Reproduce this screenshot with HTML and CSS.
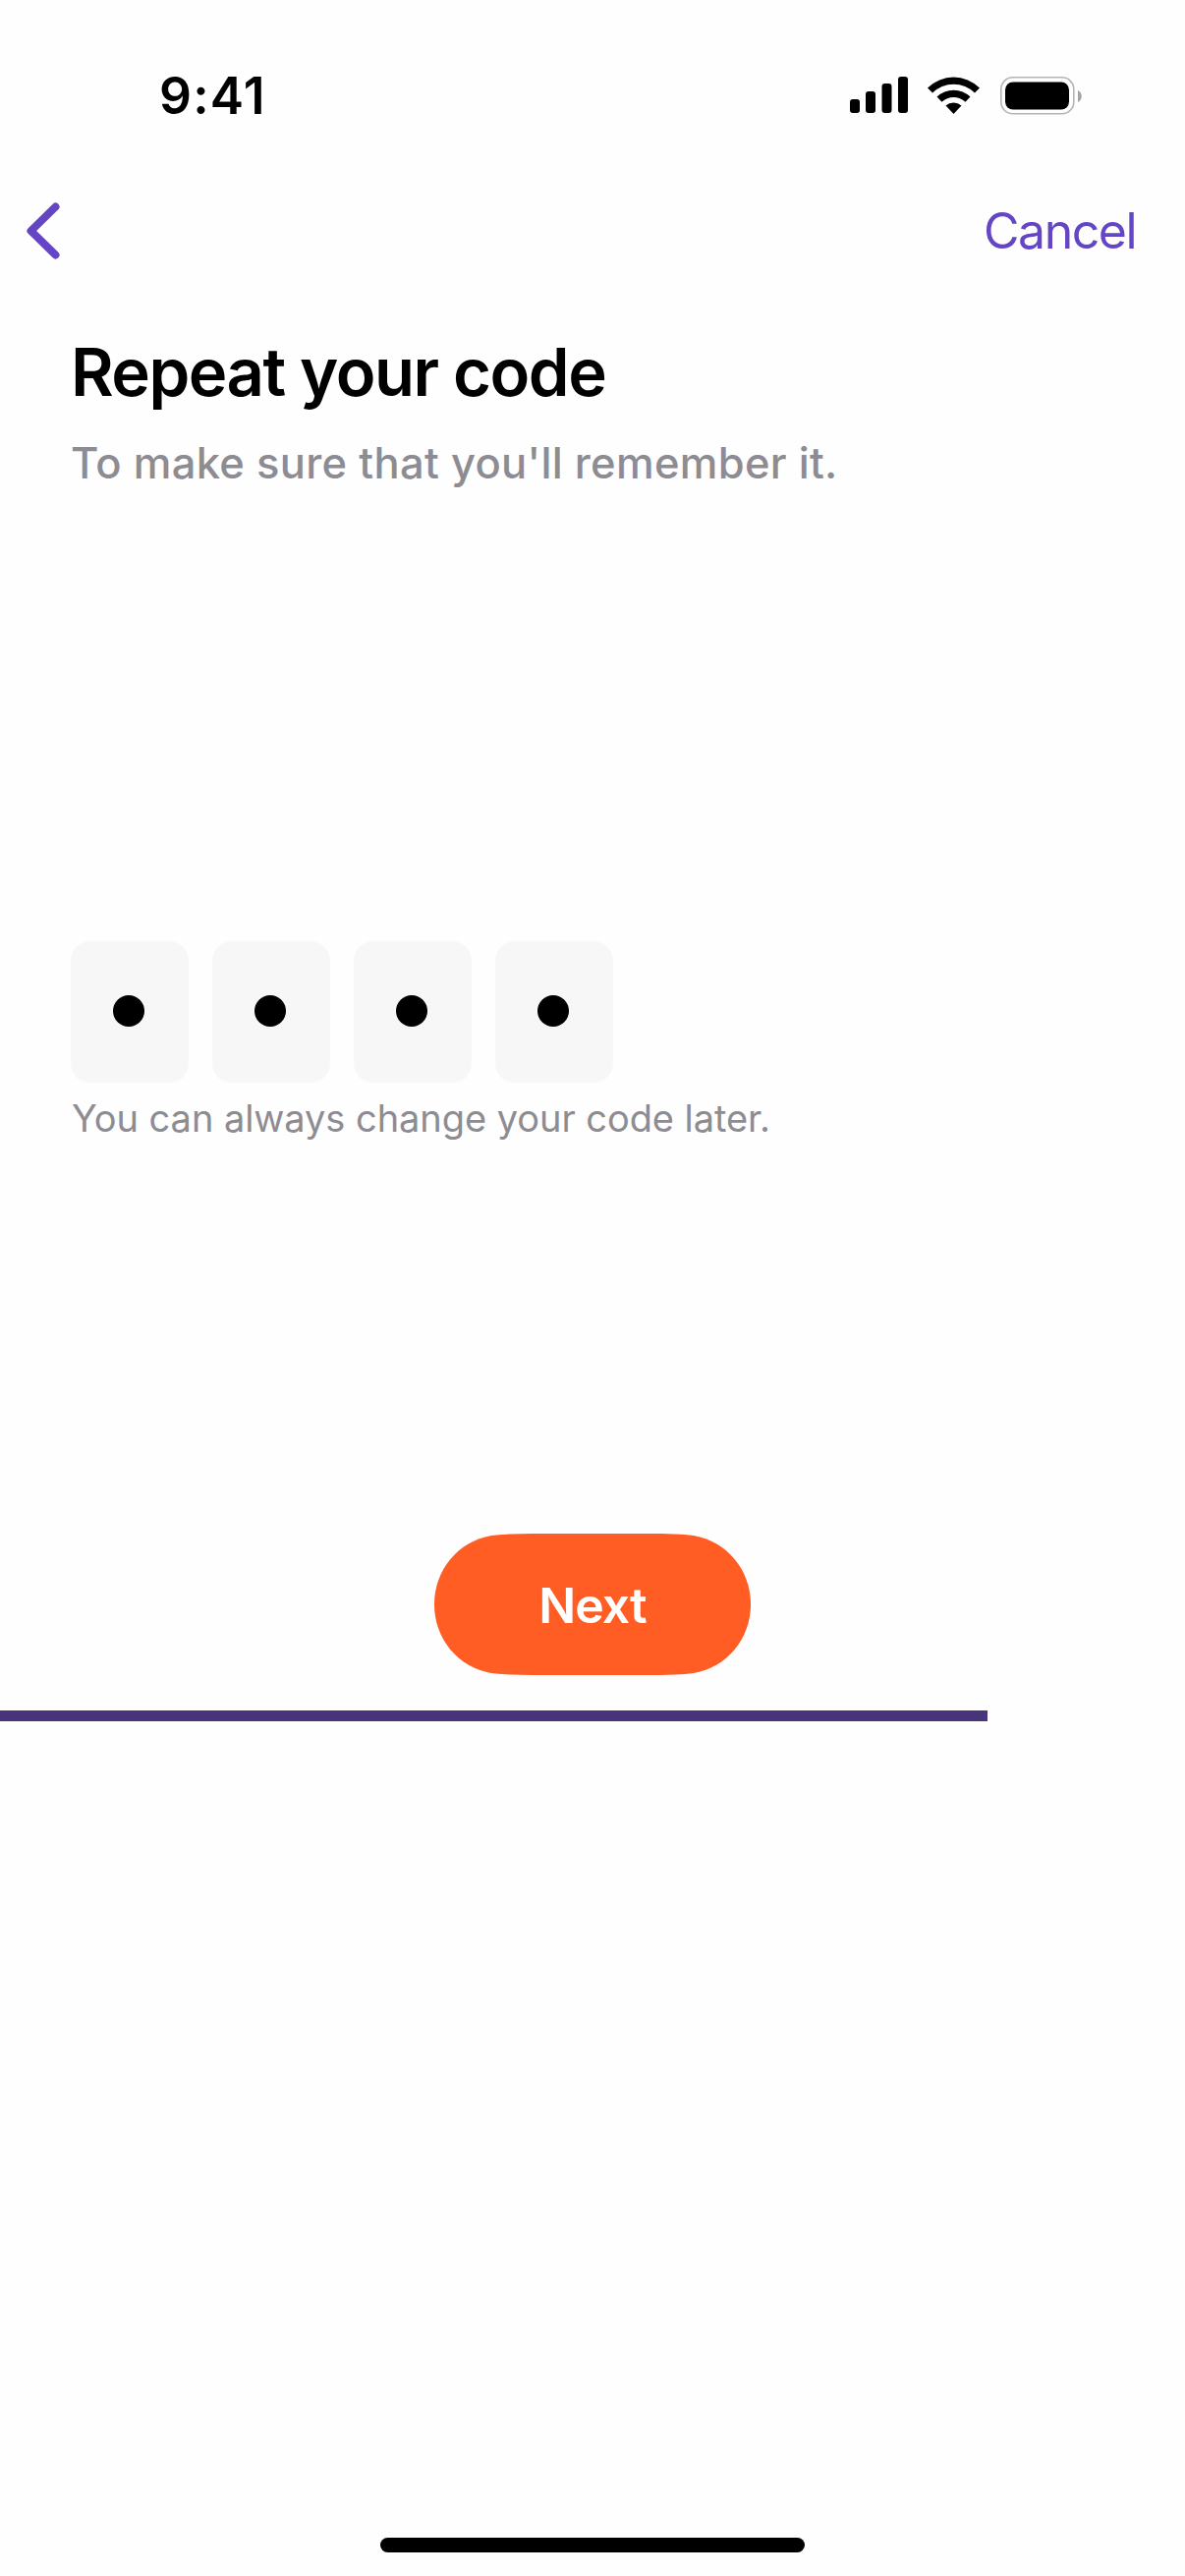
FILE: index.html
```
<!DOCTYPE html>
<html lang="en">
<head>
    <meta charset="UTF-8">
    <meta name="viewport" content="width=device-width, initial-scale=1.0">
    <title>Repeat your code</title>
    <link rel="stylesheet" href="styles.css">
</head>
<body>
    <div class="screen">
        <div class="status-bar">
            <span class="time">9:41</span>
            <svg class="status-icons" width="238" height="40" viewBox="0 0 238 40">
                <!-- signal -->
                <rect x="1" y="24" width="10" height="14" rx="3"/>
                <rect x="17" y="16" width="10" height="22" rx="3"/>
                <rect x="33.5" y="8" width="10" height="30" rx="3"/>
                <rect x="50" y="1" width="10" height="37" rx="3"/>
                <!-- wifi -->
                <path d="M80 12.5a37.5 37.5 0 0 1 53 0l-5 5a30.5 30.5 0 0 0-43 0z"/>
                <path d="M89.5 21.5a24.5 24.5 0 0 1 34 0l-5 5.2a17.5 17.5 0 0 0-24 0z"/>
                <path d="M98.5 30.5a12 12 0 0 1 16 0l-8 8.5z"/>
                <!-- battery -->
                <rect class="battery-outline" x="154.8" y="1.8" width="74" height="37" rx="12"/>
                <rect x="159" y="6.5" width="65" height="28" rx="8"/>
                <path class="battery-cap" d="M233 15c5 2 5 10 0 12z"/>
            </svg>
        </div>
        <div class="nav-bar">
            <svg class="back" width="36" height="60" viewBox="0 0 36 60">
                <path d="M29.5 5.5L4.5 30L29.5 54.5"/>
            </svg>
            <span class="cancel">Cancel</span>
        </div>
        <div class="content">
            <h1>Repeat your code</h1>
            <p class="subtitle">To make sure that you'll remember it.</p>
            <div class="code">
                <div class="digit"></div>
                <div class="digit"></div>
                <div class="digit"></div>
                <div class="digit"></div>
            </div>
            <p class="hint">You can always change your code later.</p>
        </div>
        <button class="next">Next</button>
        <div class="progress"></div>
        <div class="home-indicator"></div>
    </div>
</body>
</html>
```

FILE: styles.css
```
body {
    margin: 0;
    background-color: #fefefe;
    font-family: Inter, "Liberation Sans", sans-serif;
}
.screen {
    display: flex;
    flex-direction: column;
    height: 2622px;
    overflow: hidden;
}
.status-bar {
    display: flex;
    justify-content: space-between;
    align-items: flex-start;
    height: 113px;
    padding: 77px 104px 0 162px;
}
.time {
    font-size: 51.5px;
    line-height: 40px;
    font-weight: 600;
    letter-spacing: 1.2px;
}
.battery-outline {
    fill: none;
    stroke: #b4b4b8;
    stroke-width: 1.6;
}
.battery-cap {
    fill: #a2a2a8;
}
.nav-bar {
    display: flex;
    justify-content: space-between;
    align-items: center;
    height: 90px;
    padding: 0 50px 0 27px;
}
.back path {
    fill: none;
    stroke: #6446c4;
    stroke-width: 8;
    stroke-linecap: round;
    stroke-linejoin: round;
}
.cancel {
    color: #6446c4;
    font-size: 50px;
    line-height: 60px;
    letter-spacing: -1.5px;
}
.content {
    height: 1222px;
    padding: 59px 72px 0;
}
h1 {
    margin: 0;
    font-size: 67px;
    line-height: 80px;
    font-weight: 600;
    letter-spacing: -1.5px;
}
.subtitle {
    margin: 26px 0 0;
    color: #8d8c92;
    font-size: 43.5px;
    line-height: 52px;
    font-weight: 500;
    letter-spacing: 0.3px;
}
.code {
    display: flex;
    gap: 24px;
    margin-top: 461px;
}
.digit {
    display: flex;
    align-items: center;
    justify-content: center;
    width: 120px;
    height: 144px;
    border-radius: 20px;
    background-color: #f7f7f7;
}
.digit::before {
    content: "";
    width: 32px;
    height: 32px;
    margin: 0 2px 2px 0;
    border-radius: 50%;
    background-color: #000;
}
.hint {
    margin: 12px 0 0 1px;
    color: #8d8c92;
    font-size: 38px;
    line-height: 48px;
    letter-spacing: -0.06px;
}
.next {
    align-self: center;
    flex-shrink: 0;
    width: 322px;
    height: 144px;
    padding: 1px 0 0;
    border: none;
    background-color: #ff5d24;
    color: white;
    font-family: inherit;
    font-size: 50px;
    font-weight: 600;
    letter-spacing: -1px;
    /* continuous corners instead of plain round ones */
    clip-path: path("M0 72C0 37 24 8 58 2C75 0 92 0 112 0H210C230 0 247 0 264 2C298 8 322 37 322 72C322 107 298 136 264 142C247 144 230 144 210 144H112C92 144 75 144 58 142C24 136 0 107 0 72Z");
}
.progress {
    width: 1005px;
    height: 11px;
    margin-top: 36px;
    background-color: #48347a;
}
.home-indicator {
    align-self: center;
    width: 432px;
    height: 15px;
    margin-top: auto;
    margin-bottom: 24px;
    border-radius: 8px;
    background-color: #000;
}
```
